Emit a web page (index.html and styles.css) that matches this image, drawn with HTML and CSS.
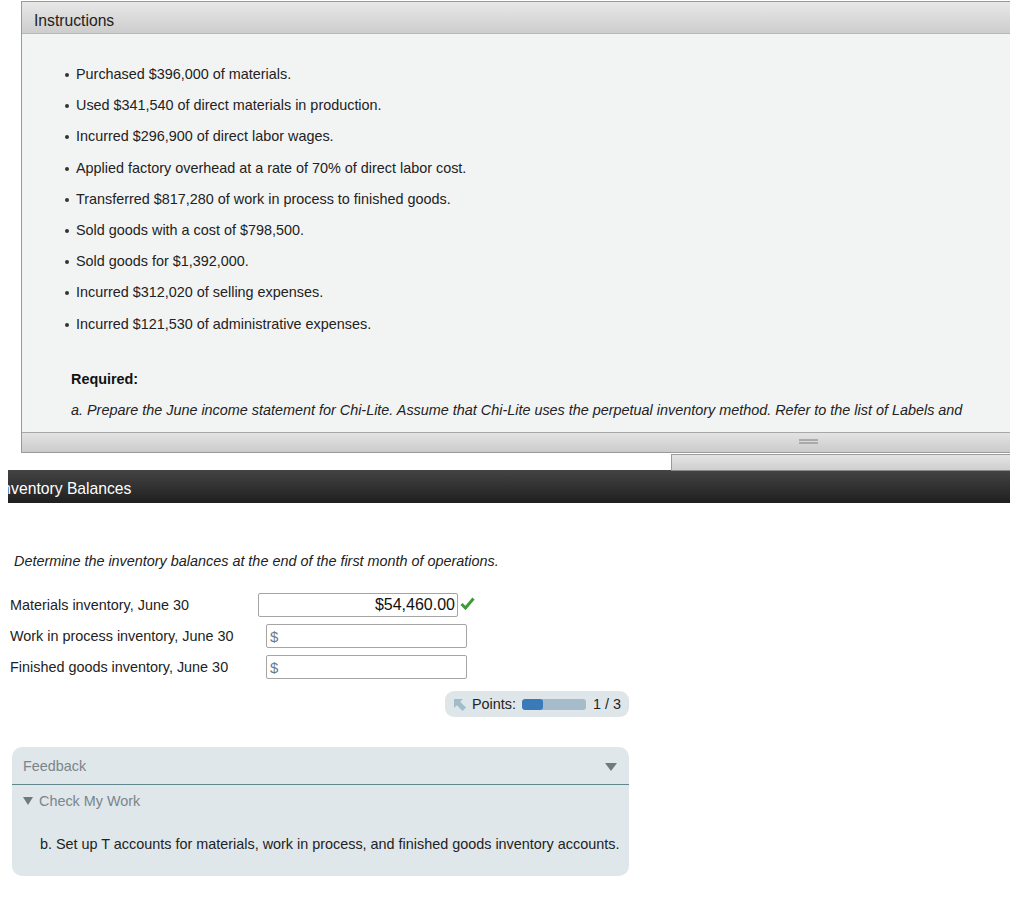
FILE: index.html
```html
<!DOCTYPE html>
<html>
<head>
<meta charset="utf-8">
<link rel="stylesheet" href="styles.css">
</head>
<body>
<div class="instr">
  <div class="instr-head">Instructions</div>
  <div class="instr-body">
    <ul class="bul">
      <li>Purchased $396,000 of materials.</li>
      <li>Used $341,540 of direct materials in production.</li>
      <li>Incurred $296,900 of direct labor wages.</li>
      <li>Applied factory overhead at a rate of 70% of direct labor cost.</li>
      <li>Transferred $817,280 of work in process to finished goods.</li>
      <li>Sold goods with a cost of $798,500.</li>
      <li>Sold goods for $1,392,000.</li>
      <li>Incurred $312,020 of selling expenses.</li>
      <li>Incurred $121,530 of administrative expenses.</li>
    </ul>
    <p class="req">Required:</p>
    <p class="req-a">a. Prepare the June income statement for Chi-Lite. Assume that Chi-Lite uses the perpetual inventory method. Refer to the list of Labels and</p>
  </div>
  <div class="instr-foot"><span class="grip"></span></div>
</div>
<div class="subbar-row"><div class="subbar"></div></div>
<div class="darkbar"><span class="darktitle">Inventory Balances</span></div>

<p class="determine">Determine the inventory balances at the end of the first month of operations.</p>

<div class="rows">
  <div class="row">
    <span class="lbl">Materials inventory, June 30</span>
    <span class="inp inp-filled">$54,460.00</span>
    <svg class="check" width="15" height="13" viewBox="0 0 15 13"><path d="M1.5 7 L5.5 11 L13.5 1.5" fill="none" stroke="#3f9a3a" stroke-width="3"/></svg>
  </div>
  <div class="row">
    <span class="lbl">Work in process inventory, June 30</span>
    <span class="inp inp-empty">$</span>
  </div>
  <div class="row">
    <span class="lbl">Finished goods inventory, June 30</span>
    <span class="inp inp-empty">$</span>
  </div>
</div>

<div class="points-wrap">
  <div class="points">
    <svg class="arrow" width="14" height="14" viewBox="0 0 14 14"><path d="M1 1 H10 L7.2 3.8 L13 9.6 L9.6 13 L3.8 7.2 L1 10 Z" fill="#a3bccc"/></svg>
    <span class="ptlbl">Points:</span>
    <span class="ptbar"><span class="ptfill"></span></span>
    <span class="ptval">1 / 3</span>
  </div>
</div>

<div class="feedback">
  <div class="fb-head"><span>Feedback</span><span class="tri"></span></div>
  <div class="fb-body">
    <div class="cmw"><span class="tri2"></span>Check My Work</div>
    <p class="fb-text">b. Set up T accounts for materials, work in process, and finished goods inventory accounts.</p>
  </div>
</div>
</body>
</html>
```
FILE: styles.css
```css
* { box-sizing: border-box; }
html, body { margin: 0; padding: 0; background: #fff; }
body {
  width: 1010px;
  height: 897px;
  overflow: hidden;
  font-family: "Liberation Sans", Arial, sans-serif;
  font-size: 14.4px;
  color: #222;
}
.instr {
  margin: 1px 0 0 21px;
  border: 1px solid #9a9a9a;
  border-right: none;
  height: 452px;
  display: flex;
  flex-direction: column;
  background: #f2f4f4;
}
.instr-head {
  height: 32px;
  background: linear-gradient(#e8e8e8, #cdcdcd);
  border-bottom: 1px solid #b8b8b8;
  font-size: 15.7px;
  color: #222;
  padding: 10px 0 0 12px;
  line-height: 18px;
}
.instr-body {
  flex: 1;
  padding-top: 32px;
}
.bul {
  margin: 0;
  padding: 0 0 0 54px;
  list-style: none;
}
.bul li {
  height: 31.2px;
  line-height: 16px;
  position: relative;
  color: #222;
}
.bul li::before {
  content: "";
  position: absolute;
  left: -11px;
  top: 7px;
  width: 4px;
  height: 4px;
  border-radius: 50%;
  background: #333;
}
.req {
  margin: 24px 0 0 49px;
  font-weight: bold;
  line-height: 16px;
  color: #111;
}
.req-a {
  margin: 15px 0 0 49px;
  font-style: italic;
  line-height: 16px;
  color: #222;
  white-space: nowrap;
}
.instr-foot {
  height: 20px;
  border-top: 1px solid #a8a8a8;
  background: linear-gradient(#e3e3e3, #cbcbcb);
  position: relative;
}
.grip {
  position: absolute;
  left: 777px;
  top: 6px;
  width: 19px;
  height: 5px;
  border-top: 2px solid #aaa;
  border-bottom: 2px solid #aaa;
}
.subbar-row {
  height: 17px;
  display: flex;
  justify-content: flex-end;
  border-top: 1px solid #fff;
}
.subbar {
  width: 339px;
  height: 17px;
  border-top: 1px solid #9a9a9a;
  border-left: 1px solid #9a9a9a;
  border-bottom: 1px solid #8a8a8a;
  background: linear-gradient(#e4e4e4, #cfcfcf);
}
.darkbar {
  margin-left: 8px;
  height: 33px;
  background: linear-gradient(#444, #1f1f1f);
  overflow: hidden;
  white-space: nowrap;
}
.darktitle {
  display: inline-block;
  margin-left: -10px;
  color: #fff;
  font-size: 15.7px;
  line-height: 18px;
  padding-top: 10px;
}
.determine {
  margin: 50px 0 0 14px;
  font-style: italic;
  line-height: 16px;
  color: #222;
}
.rows {
  margin: 24px 0 0 10px;
  display: flex;
  flex-direction: column;
  gap: 7px;
}
.row {
  display: flex;
  align-items: center;
  height: 24px;
}
.lbl {
  width: 248px;
  color: #222;
}
.inp {
  height: 24px;
  border: 1px solid #a5a5a5;
  border-radius: 2px;
  background: #fff;
  display: flex;
  align-items: center;
}
.inp-filled {
  width: 200px;
  justify-content: flex-end;
  padding-right: 2px;
  font-size: 16px;
  color: #111;
}
.check { margin-left: 2px; margin-top: -3px; }
.inp-empty {
  margin-left: 8px;
  width: 201px;
  padding-left: 3px;
  font-size: 15px;
  color: #6a7a86;
}
.points-wrap {
  margin: 12px 0 0 445px;
}
.points {
  width: 184px;
  height: 26px;
  background: #dfe6ea;
  border-radius: 9px;
  display: flex;
  align-items: center;
  padding-left: 8px;
}
.arrow { margin-right: 5px; margin-top: 1px; }
.ptlbl { color: #222; margin-right: 6px; }
.ptbar {
  width: 64px;
  height: 11px;
  background: #a7bccb;
  border-radius: 3px;
  overflow: hidden;
  display: flex;
}
.ptfill {
  width: 21px;
  background: #3a7ab8;
  border-radius: 3px;
}
.ptval { margin-left: 7px; color: #222; }
.feedback {
  margin: 30px 0 0 12px;
  width: 617px;
  height: 129px;
  background: #dfe7ea;
  border-radius: 10px;
}
.fb-head {
  height: 38px;
  border-bottom: 1px solid #5f878c;
  display: flex;
  justify-content: space-between;
  align-items: center;
  padding: 0 11px 0 11px;
  color: #7b858a;
  line-height: 16px;
}
.tri {
  width: 0;
  height: 0;
  border-left: 6px solid transparent;
  border-right: 6px solid transparent;
  border-top: 8px solid #6d7b80;
  margin-right: 1px;
  margin-top: 2px;
}
.fb-body { padding: 8px 0 0 11px; }
.cmw {
  color: #7b858a;
  line-height: 16px;
  display: flex;
  align-items: center;
}
.tri2 {
  width: 0;
  height: 0;
  border-left: 5px solid transparent;
  border-right: 5px solid transparent;
  border-top: 8px solid #6d7b80;
  margin-right: 6px;
}
.fb-text {
  margin: 27px 0 0 17px;
  line-height: 16px;
  color: #222;
}
```
